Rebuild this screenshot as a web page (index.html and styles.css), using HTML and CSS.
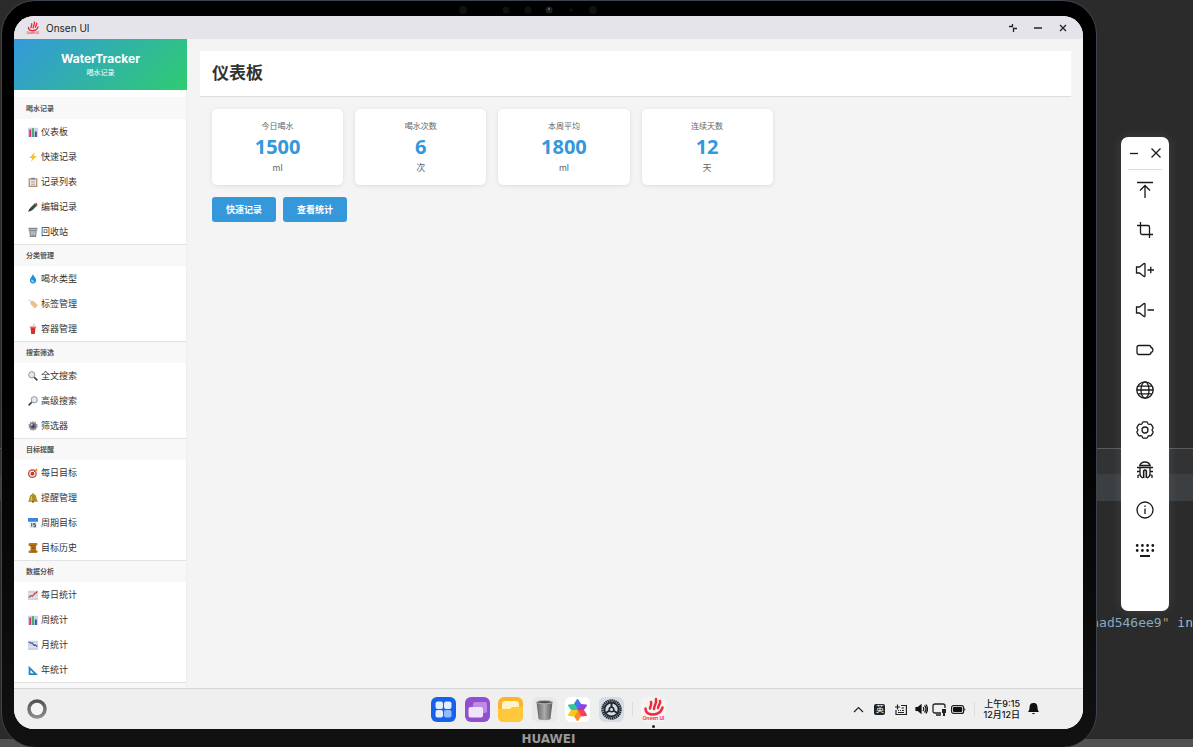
FILE: index.html
```html
<!DOCTYPE html>
<html lang="zh-CN">
<head>
    <meta charset="UTF-8">
    <meta name="viewport" content="width=device-width, initial-scale=1.0">
    <title>WaterTracker</title>
    <link rel="stylesheet" href="styles.css">
</head>
<body>
    <!-- shared icon shapes -->
    <svg class="defs" width="0" height="0" aria-hidden="true">
        <symbol id="bars" viewBox="0 0 16 16"><path fill="#ced3e4" d="M0 1h16v15H0z"/><path fill="#d9326f" d="M2 4h3v12H2z"/><path fill="#35ad6b" d="M6.500 2h3v14h-3z"/><path fill="#3b46b5" d="M11 7h3v9h-3z"/></symbol>
        <symbol id="bolt" viewBox="0 0 16 16"><path fill="#fcc21b" d="M11 0 2 9.500h5L4.500 16 14 6.500H9z"/></symbol>
        <symbol id="clipboard" viewBox="0 0 16 16"><path fill="#b78a64" d="M1 2h14v14H1z"/><path fill="#e9eaee" d="M3 4h10v10H3z"/><path fill="#7d8590" d="M5 1h6v3H5zM5 7h6v1H5zm0 2h6v1H5zm0 2h6v1H5z"/></symbol>
        <symbol id="pen" viewBox="0 0 16 16"><path fill="#21584a" d="m3 10 8-8 4 3-9 9z"/><path fill="#d5402f" d="m10 3 4-2 1 3-2 3z"/><path fill="#222" d="m3 10 3 3-6 3z"/></symbol>
        <symbol id="bin" viewBox="0 0 16 16"><path fill="#7f868d" d="M1 1h14v4h-1l-1 11H3L2 5H1z"/><path stroke="#d6dade" d="M2.500 4h11M5 6l.5 8M8 6v8M11 6l-.5 8M4 8h8M4 11h8"/></symbol>
        <symbol id="drop" viewBox="0 0 16 16"><path fill="#1c8fd6" d="M8 0c1 4 5 6 5 10a5 5 0 0 1-10 0c0-4 4-6 5-10z"/><path fill="#7fd0f5" d="M5 9c1-1 4 0 5 3-1 3-6 1-5-3z"/></symbol>
        <symbol id="tag" viewBox="0 0 16 16"><path fill="#f0bd82" d="m4 3 5 0 7 7-5 5-7-7z"/><path fill="none" stroke="#bbb" d="M0 2c3-1 5 1 6 3"/></symbol>
        <symbol id="cup" viewBox="0 0 16 16"><path fill="#d6312b" d="M4 5h8l-1 11H5z"/><path fill="#ef5d50" d="M3 4h10v2H3z"/><path fill="none" stroke="#b8bcc0" stroke-width="1.500" d="M8 4l1-3 3-1"/></symbol>
        <symbol id="glass" viewBox="0 0 16 16"><circle cx="6" cy="6" r="5" fill="#e1e8ee" stroke="#8b8f95" stroke-width="1.500"/><path stroke="#3a3a3d" stroke-width="2.500" d="m10 10 5 5"/></symbol>
        <symbol id="gear-solid" viewBox="0 0 16 16"><circle cx="8" cy="8" r="6" fill="#747486" stroke="#9293a3" stroke-width="3" stroke-dasharray="2 1.800"/><circle cx="8" cy="8" r="3" fill="#454653"/><circle cx="6" cy="6" r="1.500" fill="#d5d8e0"/></symbol>
        <symbol id="target" viewBox="0 0 16 16"><circle cx="7" cy="9" r="7" fill="#c73931"/><circle cx="7" cy="9" r="5" fill="#f1efef"/><circle cx="7" cy="9" r="3" fill="#c73931"/><path stroke="#505a66" stroke-width="1.500" d="m7 9 6-6"/><path fill="#ef8a3a" d="m11 3 3-3v2l2 1-3 3-2 0z"/></symbol>
        <symbol id="bell" viewBox="0 0 16 16"><path fill="#b18c22" d="M7 0h2v2c5 1 4 5 5 8l2 4H0l2-4c1-3 0-7 5-8z"/><path fill="#e7c657" d="M6 4c-2 2-1 5-2 8h3z"/><circle cx="8" cy="14" r="1.700" fill="#775b12"/></symbol>
        <symbol id="calendar" viewBox="0 0 16 16"><path fill="#e5edf5" d="M2 4h12v12H2z"/><path fill="#3f86d5" d="M0 0h16v6H0z"/><path fill="none" stroke="#36475a" stroke-width="1.500" d="M6 8v6m6-5H9v2h3v3H8.500"/></symbol>
        <symbol id="scroll" viewBox="0 0 16 16"><path fill="#b97818" d="M3 0h10c3 0 3 4 0 4v8h2c1 2 0 4-2 4H3c-3 0-3-4 0-4h1V5H3C0 5 0 0 3 0z"/><path stroke="#744509" d="M4 4h8M6 7h5M6 9h5M5 13h8"/></symbol>
        <symbol id="chart-up" viewBox="0 0 16 16"><path fill="#ced3e0" d="M0 1h16v15H0z"/><path fill="none" stroke="#fff" d="M0 6h16M0 11h16"/><path fill="none" stroke="#d33c32" stroke-width="1.800" d="m1 12 4-3 2 1 4-5h2l2-3"/></symbol>
        <symbol id="chart-down" viewBox="0 0 16 16"><path fill="#ced3e0" d="M0 1h16v15H0z"/><path fill="none" stroke="#fff" d="M0 6h16M0 11h16"/><path fill="none" stroke="#3548bd" stroke-width="1.800" d="m1 3 3 2 3 0 3 4 2-1 3 3"/></symbol>
        <symbol id="ruler" viewBox="0 0 16 16"><path fill="#2389c4" fill-rule="evenodd" d="m1 1 15 15H1zm3 7v5h5z"/></symbol>
        <symbol id="onsen" viewBox="0 0 25 25"><path fill="none" stroke="#ec2b40" stroke-width="2.500" stroke-linecap="round" d="M4.500 11.500c0 6 7 7 12 5 3-1 4-3 5-6M9 11.500C9 9 11 8 10 5m3 7c0-4 3-5 2-10m2 9c0-3 3-4 2-7"/><text x="12.500" y="23" text-anchor="middle" class="logo-text">Onsen UI</text></symbol>
    </svg>

    <div class="editor">
        <div class="editor-code"></div>
        <div class="editor-tabs"></div>
        <div class="editor-toolbar"></div>
        <div class="editor-console"><span class="hash">nad546ee9</span><span class="quote">"</span> in</div>
        <div class="editor-status"></div>
    </div>

    <div class="device">
        <div class="bezel-top">
            <svg width="184" height="15" fill="#111"><circle cx="6" cy="9" r="4"/><circle cx="49" cy="9" r="3.500"/><circle cx="71" cy="9" r="3.500"/><circle cx="92" cy="9" r="3.500" fill="#182126"/><circle cx="92" cy="8" r="1.200" fill="#52636d"/><circle cx="114" cy="9" r="1.800"/><circle cx="136" cy="9" r="4"/></svg>
        </div>

        <div class="screen">
            <header class="titlebar">
                <svg class="titlebar-logo"><use href="#onsen"/></svg>
                <span class="titlebar-name">Onsen UI</span>
                <button class="win-btn" aria-label="还原"><svg width="10" height="10" fill="none" stroke="#222" stroke-width="1.300"><path d="M1 3.500h3.500V1M5.500 9V5.500H9"/></svg></button>
                <button class="win-btn" aria-label="最小化"><svg width="10" height="10" stroke="#222" stroke-width="1.300"><path d="M1 5h8"/></svg></button>
                <button class="win-btn" aria-label="关闭"><svg width="10" height="10" stroke="#222" stroke-width="1.300"><path d="m2 2 6 6m0-6L2 8"/></svg></button>
            </header>

            <div class="app">
                <aside class="sidebar">
                    <div class="brand">
                        <div class="brand-name">WaterTracker</div>
                        <div class="brand-sub">喝水记录</div>
                    </div>
                    <nav class="menu">
                        <h2>喝水记录</h2>
                        <a href="#"><svg><use href="#bars"/></svg>仪表板</a>
                        <a href="#"><svg><use href="#bolt"/></svg>快速记录</a>
                        <a href="#"><svg><use href="#clipboard"/></svg>记录列表</a>
                        <a href="#"><svg><use href="#pen"/></svg>编辑记录</a>
                        <a href="#"><svg><use href="#bin"/></svg>回收站</a>
                        <h2>分类管理</h2>
                        <a href="#"><svg><use href="#drop"/></svg>喝水类型</a>
                        <a href="#"><svg><use href="#tag"/></svg>标签管理</a>
                        <a href="#"><svg><use href="#cup"/></svg>容器管理</a>
                        <h2>搜索筛选</h2>
                        <a href="#"><svg><use href="#glass"/></svg>全文搜索</a>
                        <a href="#"><svg class="flip"><use href="#glass"/></svg>高级搜索</a>
                        <a href="#"><svg><use href="#gear-solid"/></svg>筛选器</a>
                        <h2>目标提醒</h2>
                        <a href="#"><svg><use href="#target"/></svg>每日目标</a>
                        <a href="#"><svg><use href="#bell"/></svg>提醒管理</a>
                        <a href="#"><svg><use href="#calendar"/></svg>周期目标</a>
                        <a href="#"><svg><use href="#scroll"/></svg>目标历史</a>
                        <h2>数据分析</h2>
                        <a href="#"><svg><use href="#chart-up"/></svg>每日统计</a>
                        <a href="#"><svg><use href="#bars"/></svg>周统计</a>
                        <a href="#"><svg><use href="#chart-down"/></svg>月统计</a>
                        <a href="#"><svg><use href="#ruler"/></svg>年统计</a>
                        <div class="menu-rest"></div>
                    </nav>
                </aside>

                <main class="content">
                    <h1>仪表板</h1>
                    <div class="stats">
                        <div class="card">
                            <div class="card-label">今日喝水</div>
                            <div class="card-value">1500</div>
                            <div class="card-unit">ml</div>
                        </div>
                        <div class="card">
                            <div class="card-label">喝水次数</div>
                            <div class="card-value">6</div>
                            <div class="card-unit">次</div>
                        </div>
                        <div class="card">
                            <div class="card-label">本周平均</div>
                            <div class="card-value">1800</div>
                            <div class="card-unit">ml</div>
                        </div>
                        <div class="card">
                            <div class="card-label">连续天数</div>
                            <div class="card-value">12</div>
                            <div class="card-unit">天</div>
                        </div>
                    </div>
                    <div class="actions">
                        <button class="btn">快速记录</button>
                        <button class="btn">查看统计</button>
                    </div>
                </main>
            </div>

            <footer class="taskbar">
                <button class="home" aria-label="主屏幕"><svg width="22" height="22"><defs><linearGradient id="ring" x2="0" y2="1"><stop stop-color="#555"/><stop offset="1" stop-color="#8a8a8a"/></linearGradient></defs><circle cx="11" cy="11" r="8" fill="#f5f5f5" stroke="url(#ring)" stroke-width="3.500"/></svg></button>
                <div class="dock">
                    <div class="dock-apps">
                        <svg viewBox="0 0 25 25"><rect width="25" height="25" rx="6" fill="#1462ee"/><g fill="#e3efff"><rect x="4.500" y="4.500" width="7.500" height="7.500" rx="2"/><rect x="13" y="4.500" width="7.500" height="7.500" rx="2"/><rect x="4.500" y="13" width="7.500" height="7.500" rx="2"/><rect x="13" y="13" width="7.500" height="7.500" rx="2" fill="#8fbcff"/></g></svg>
                        <svg viewBox="0 0 25 25"><rect width="25" height="25" rx="6" fill="#9150cf"/><rect x="8" y="5" width="14" height="11" rx="2" fill="#bd8ae6"/><rect x="3.500" y="10" width="14.500" height="10.500" rx="2" fill="#f0e4fb"/></svg>
                        <svg viewBox="0 0 25 25"><rect width="25" height="25" rx="6" fill="#fbb625"/><path fill="#fff1c8" d="M4 7c0-2 1-3 3-3h11c2 0 3 1 3 3v8H4z"/><path fill="#ffc83a" d="M0 12h11c2 0 2-2 4-2h10v9c0 4-2 6-6 6H6c-4 0-6-2-6-6z"/></svg>
                        <svg viewBox="0 0 25 25"><defs><linearGradient id="can"><stop stop-color="#666"/><stop offset=".5" stop-color="#aaa"/><stop offset="1" stop-color="#5c5c5c"/></linearGradient></defs><rect width="25" height="25" rx="6" fill="#e8e8e8"/><path fill="url(#can)" d="M4.500 5h16l-2 17c-2 1.500-10 1.500-12 0z"/><ellipse cx="12.500" cy="5.200" rx="8" ry="1.600" fill="#4f4f4f" stroke="#b6b6b6"/></svg>
                        <svg viewBox="0 0 25 25"><rect width="25" height="25" rx="6" fill="#fff"/><g stroke-width="2" stroke-linejoin="round"><path fill="#4479ee" stroke="#4479ee" d="M12.500 12 10 7l2.500-4L15 7z"/><path fill="#9242dc" stroke="#9242dc" d="m13.500 12 2.500-4 5 .5-2.500 3.500z"/><path fill="#ef4161" stroke="#ef4161" d="M13.500 14h5l2.500 4-5 .5z"/><path fill="#fb8c2b" stroke="#fb8c2b" d="m12.500 14 2.500 5-2.500 4-2.500-4z"/><path fill="#f9c920" stroke="#f9c920" d="M11.500 14 9 18.500 4 18l2.500-4z"/><path fill="#35c59a" stroke="#35c59a" d="M11.500 12h-5L4 8.500 9 8z"/></g></svg>
                        <svg viewBox="0 0 25 25"><rect width="25" height="25" rx="6" fill="#d6dce4"/><circle cx="12.500" cy="12.500" r="9" fill="none" stroke="#242a32" stroke-width="2.500" stroke-dasharray="1.500 .5"/><circle cx="12.500" cy="12.500" r="7" fill="#d6dce4" stroke="#242a32" stroke-width="1.800"/><circle cx="12.500" cy="12.500" r="2.300" fill="none" stroke="#242a32" stroke-width="1.500"/><path stroke="#242a32" stroke-width="2" d="M12.500 5v5.500M6 16.500l4.500-3m8.500 3-4.500-3"/></svg>
                    </div>
                    <span class="divider"></span>
                    <div class="dock-active"><svg><use href="#onsen"/></svg></div>
                </div>
                <div class="tray">
                    <div class="tray-tools">
                        <svg width="11" height="11" fill="none" stroke="#222" stroke-width="1.200"><path d="m1 8 4.500-4.500L10 8"/></svg>
                        <span class="ime">英</span>
                        <svg width="12" height="11" fill="none" stroke="#222" stroke-width="1.200"><path d="M6 1.500h5.400v9H1V6M0 3h5M2.500.5v5M6.500 4H9M3 6.500h1m1 0h1m1 0h2M3 8.500h6"/></svg>
                    </div>
                    <div class="tray-status">
                        <svg width="13" height="12" fill="none" stroke="#111" stroke-width="1.200"><path fill="#111" d="M1 4.500h2l3-2.500v8L3 7.500H1z"/><path d="M8 4q1.500 2 0 4M9.500 2.500q3 3.500 0 7M11 1.500q3 4.500 0 9"/></svg>
                        <svg width="15" height="13" fill="none" stroke="#222" stroke-width="1.300"><path d="M9 10H3q-2 0-2-2V3q0-2 2-2h8q2 0 2 2v2M4 12h5"/><path fill="#222" stroke="none" d="M10 6h4v4h-1v3h-2v-3h-1z"/></svg>
                        <svg width="15" height="11"><rect x=".6" y="1.600" width="12" height="7.800" rx="2" fill="none" stroke="#222" stroke-width="1.200"/><rect x="2" y="3" width="9.200" height="5" rx="1" fill="#111"/><path fill="#222" d="M13.300 4q2 1.500 0 3z"/></svg>
                    </div>
                    <span class="divider"></span>
                    <div class="clock">上午9:15<br>12月12日</div>
                    <svg width="11" height="12" fill="#111"><path d="M5.500 0c3 0 4 2 4 4.500 0 2 .5 3 1.500 4.500H0c1-1.500 1.500-2.500 1.500-4.500C1.500 2 2.500 0 5.500 0zM4 10h3q-1.500 2.500-3 0z"/></svg>
                </div>
            </footer>
        </div>

        <div class="bezel-bottom">HUAWEI</div>
    </div>

    <div class="emulator-tools">
        <div class="tools-head">
            <button aria-label="最小化"><svg viewBox="0 0 12 12"><path d="M2 6.500h8"/></svg></button>
            <button aria-label="关闭"><svg viewBox="0 0 12 12"><path d="m1.500 1.500 9 9m0-9-9 9"/></svg></button>
        </div>
        <button aria-label="旋转"><svg viewBox="0 0 20 20"><path d="M2 2.500h16M10 18V5.500M5 10.500l5-5 5 5"/></svg></button>
        <button aria-label="截图"><svg viewBox="0 0 20 20"><path d="M2 5.500h11q1.500 0 1.500 1.500v11M5.500 2v11q0 1.500 1.500 1.500h11"/></svg></button>
        <button aria-label="音量加"><svg viewBox="0 0 20 20"><path d="M1.500 7h3L9 3.500q1-.5 1 1v11q0 1.500-1 1L4.500 13h-3zM12.500 10H19m-3.200-3.200v6.400"/></svg></button>
        <button aria-label="音量减"><svg viewBox="0 0 20 20"><path d="M1.500 7h3L9 3.500q1-.5 1 1v11q0 1.500-1 1L4.500 13h-3zM12.500 10H19"/></svg></button>
        <button aria-label="电池"><svg viewBox="0 0 20 20"><path d="M4 5.500h10q2 0 2 2 2 .5 2 2.500t-2 2.500q0 2-2 2H4q-2 0-2-2v-5q0-2 2-2z"/></svg></button>
        <button aria-label="网络"><svg viewBox="0 0 20 20"><circle cx="10" cy="10" r="8.200"/><ellipse cx="10" cy="10" rx="4" ry="8.200"/><path d="M1.800 10h16.400M3 6.200h14M3 13.800h14"/></svg></button>
        <button aria-label="设置"><svg viewBox="0 0 20 20"><path stroke-linejoin="round" d="M8.300 1.900h3.400q.8 0 1 1.200.4 1.400 1.600 1.300 1.700-.5 2.100.3l1.600 2.700q.4.800-.5 1.500-1 1.100 0 2.200.9.700.5 1.500l-1.600 2.700q-.4.800-2.100.3-1.200-.1-1.600 1.300-.2 1.200-1 1.200H8.300q-.8 0-1-1.200-.4-1.400-1.600-1.300-1.700.5-2.100-.3L2 12.600q-.4-.8.500-1.500 1-1.100 0-2.200Q1.600 8.200 2 7.400l1.600-2.700q.4-.8 2.100-.3 1.200.1 1.600-1.300.2-1.200 1-1.200z"/><circle cx="10" cy="10" r="3"/></svg></button>
        <button aria-label="调试"><svg viewBox="0 0 20 20"><path fill="#aaa" stroke="none" d="M8.500 10h3v8h-3z"/><path d="M4.800 5.500Q6 2 10 2t5.200 3.500zM2 7.500h16M5 7.500V13q0 4 3 5m7-10.500V13q0 4-3 5M8.500 18v-7q1.500-2 3 0v7M5 11.500H2m13 0h3M5.500 14.500 3 15.500V18m11.500-3.500 2.500 1V18"/></svg></button>
        <button aria-label="信息"><svg viewBox="0 0 20 20"><circle cx="10" cy="10" r="8"/><path d="M10 8.500V14M10 5.500V7"/></svg></button>
        <button aria-label="键盘"><svg viewBox="0 0 20 20"><path stroke-width="2.800" stroke-linecap="round" stroke-dasharray="0 5.200" d="M2.200 5.500h16M2.200 10.500h16"/><path stroke-width="2" d="M5 16h10"/></svg></button>
    </div>
</body>
</html>
```
FILE: styles.css
```css
* {
    box-sizing: border-box;
}

body {
    margin: 0;
    min-height: 100vh;
    display: flex;
    position: relative;
    overflow: hidden;
    padding: 0 96px 0 1px;
    background-color: #2b2b2b;
    color: #333;
    font-family: Inter, "Noto Sans CJK SC", sans-serif;
    font-size: 9px;
}

h1, h2 {
    margin: 0;
}

button {
    border: none;
    padding: 0;
    background: none;
    font-family: inherit;
    cursor: pointer;
}

svg {
    display: block;
    flex: none;
}

.defs {
    position: absolute;
}

.logo-text {
    font-size: 5px;
    font-weight: 600;
    fill: #ec2b40;
}

/* code editor behind the emulator */
.editor {
    position: absolute;
    inset: 0;
    display: flex;
    flex-direction: column;
}

.editor-code {
    height: 60vh;
}

.editor-tabs {
    height: 26px;
    border-top: 1px solid #5a5a5a;
    background-color: #323335;
}

.editor-toolbar {
    height: 27px;
    background-color: #3b3f42;
}

.editor-console {
    flex: 1;
    padding-top: 112px;
    text-align: right;
    font-family: "DejaVu Sans Mono", monospace;
    font-size: 13px;
    line-height: 20px;
    color: #a9b7c6;
}

.hash {
    color: #84a9c2;
}

.quote {
    color: #cc8a5c;
}

.editor-status {
    height: 8px;
    background-color: #515254;
}

/* tablet */
.device {
    position: relative;
    flex: 1;
    display: flex;
    flex-direction: column;
    padding: 0 13px 0 12px;
    border: 1px solid #3c4450;
    border-bottom: none;
    border-radius: 34px;
    background: linear-gradient(#000, #000 50%, #111);
}

.bezel-top {
    height: 15px;
    display: flex;
    justify-content: center;
}

.bezel-bottom {
    height: 18px;
    line-height: 20px;
    text-align: center;
    font-family: "DejaVu Sans", sans-serif;
    font-size: 12px;
    font-weight: bold;
    color: #999;
}

.screen {
    flex: 1;
    display: flex;
    flex-direction: column;
    overflow: hidden;
    border-radius: 20px;
    background-color: #f4f4f4;
}

.titlebar {
    height: 23px;
    display: flex;
    align-items: center;
    padding: 0 8px 0 12px;
    background-color: #e5e4ea;
}

.titlebar-logo {
    width: 14px;
    height: 14px;
}

.titlebar-name {
    flex: 1;
    margin-left: 6px;
    font-size: 10px;
    color: #222;
}

.win-btn {
    width: 25px;
    display: flex;
    justify-content: center;
}

.app {
    flex: 1;
    display: flex;
}

/* sidebar */
.sidebar {
    width: 173px;
    display: flex;
    flex-direction: column;
    border-right: 1px solid #eee;
    background-color: #fff;
}

.brand {
    height: 51px;
    padding-top: 11px;
    margin-right: -1px;
    text-align: center;
    color: #fff;
    background: linear-gradient(135deg, #3498db, #2ecc71);
}

.brand-name {
    font-size: 12px;
    line-height: 17px;
    font-weight: bold;
}

.brand-sub {
    font-size: 7px;
    line-height: 12px;
}

.menu {
    flex: 1;
    display: flex;
    flex-direction: column;
    padding-top: 7px;
}

.menu h2 {
    height: 22px;
    padding-left: 12px;
    border-top: 1px solid #e2e2e2;
    background-color: #f8f8f8;
    font-size: 7px;
    line-height: 22px;
    color: #555;
}

.menu h2:first-child {
    border-top-color: #f8f8f8;
}

.menu a {
    height: 25px;
    display: flex;
    align-items: center;
    gap: 3px;
    padding-left: 14px;
    color: #333;
    text-decoration: none;
}

.menu svg {
    width: 10px;
    height: 10px;
}

.menu .flip {
    transform: scaleX(-1);
}

.menu-rest {
    flex: 1;
    border-top: 1px solid #e2e2e2;
    background-color: #f8f8f8;
}

/* dashboard */
.content {
    flex: 1;
    padding: 12px 12px 12px 13px;
}

.content h1 {
    height: 46px;
    padding: 0 12px;
    border-bottom: 1px solid #ddd;
    background-color: #fff;
    font-size: 17px;
    line-height: 44px;
}

.stats {
    display: grid;
    grid-template-columns: repeat(auto-fill, minmax(123px, 1fr));
    gap: 12px;
    padding: 12px;
}

.card {
    height: 76px;
    padding-top: 10px;
    border-radius: 5px;
    background-color: #fff;
    box-shadow: 0 1px 4px rgba(0, 0, 0, 0.1);
    text-align: center;
    color: #666;
}

.card-label {
    font-size: 8px;
    line-height: 14px;
}

.card-value {
    font-family: "Noto Sans", sans-serif;
    font-size: 20px;
    line-height: 28px;
    font-weight: bold;
    color: #3498db;
}

.card-unit {
    line-height: 14px;
}

.actions {
    display: flex;
    gap: 7px;
    padding: 0 12px;
}

.btn {
    width: 64px;
    height: 25px;
    border-radius: 3px;
    background-color: #3498db;
    color: #fff;
    font-size: 9px;
    font-weight: bold;
}

/* taskbar */
.taskbar {
    height: 41px;
    display: grid;
    grid-template-columns: 1fr auto 1fr;
    align-items: center;
    padding: 0 12px;
    border-top: 1px solid #d5d5d5;
    background-color: #efefef;
}

.home {
    justify-self: start;
}

.dock {
    display: flex;
    align-items: center;
    gap: 8px;
}

.dock svg {
    width: 25px;
    height: 25px;
}

.dock-apps {
    width: 193px;
    display: flex;
    justify-content: space-between;
}

.divider {
    width: 1px;
    height: 14px;
    background-color: #ddd;
}

.dock-active {
    position: relative;
    border-radius: 6px;
    background-color: #f6f3f3;
}

.dock-active::after {
    content: "";
    position: absolute;
    left: 11px;
    bottom: -6px;
    width: 3px;
    height: 3px;
    border-radius: 50%;
    background-color: #222;
}

.tray {
    justify-self: end;
    display: flex;
    align-items: center;
    gap: 8px;
    padding-right: 32px;
    color: #111;
}

.tray-tools {
    display: flex;
    gap: 10px;
}

.tray-status {
    display: flex;
    align-items: center;
    gap: 4px;
}

.ime {
    width: 11px;
    height: 11px;
    border-radius: 2px;
    background-color: #222;
    color: #fff;
    font-size: 8px;
    line-height: 11px;
    text-align: center;
}

.clock {
    text-align: right;
    line-height: 11px;
    font-weight: 500;
}

/* emulator toolbar */
.emulator-tools {
    position: absolute;
    top: 137px;
    right: 24px;
    width: 48px;
    height: 474px;
    display: flex;
    flex-direction: column;
    align-items: center;
    border-radius: 7px;
    background-color: #fff;
    box-shadow: 0 0 12px rgba(255, 255, 255, 0.1);
}

.emulator-tools button {
    height: 40px;
}

.emulator-tools svg {
    width: 20px;
    height: 20px;
    fill: none;
    stroke: #1a1a1a;
    stroke-width: 1.3;
}

.emulator-tools .tools-head {
    width: 34px;
    height: 33px;
    display: flex;
    align-items: center;
    justify-content: space-between;
    border-bottom: 1px solid #ddd;
}

.emulator-tools .tools-head svg {
    width: 12px;
    height: 12px;
}
```
